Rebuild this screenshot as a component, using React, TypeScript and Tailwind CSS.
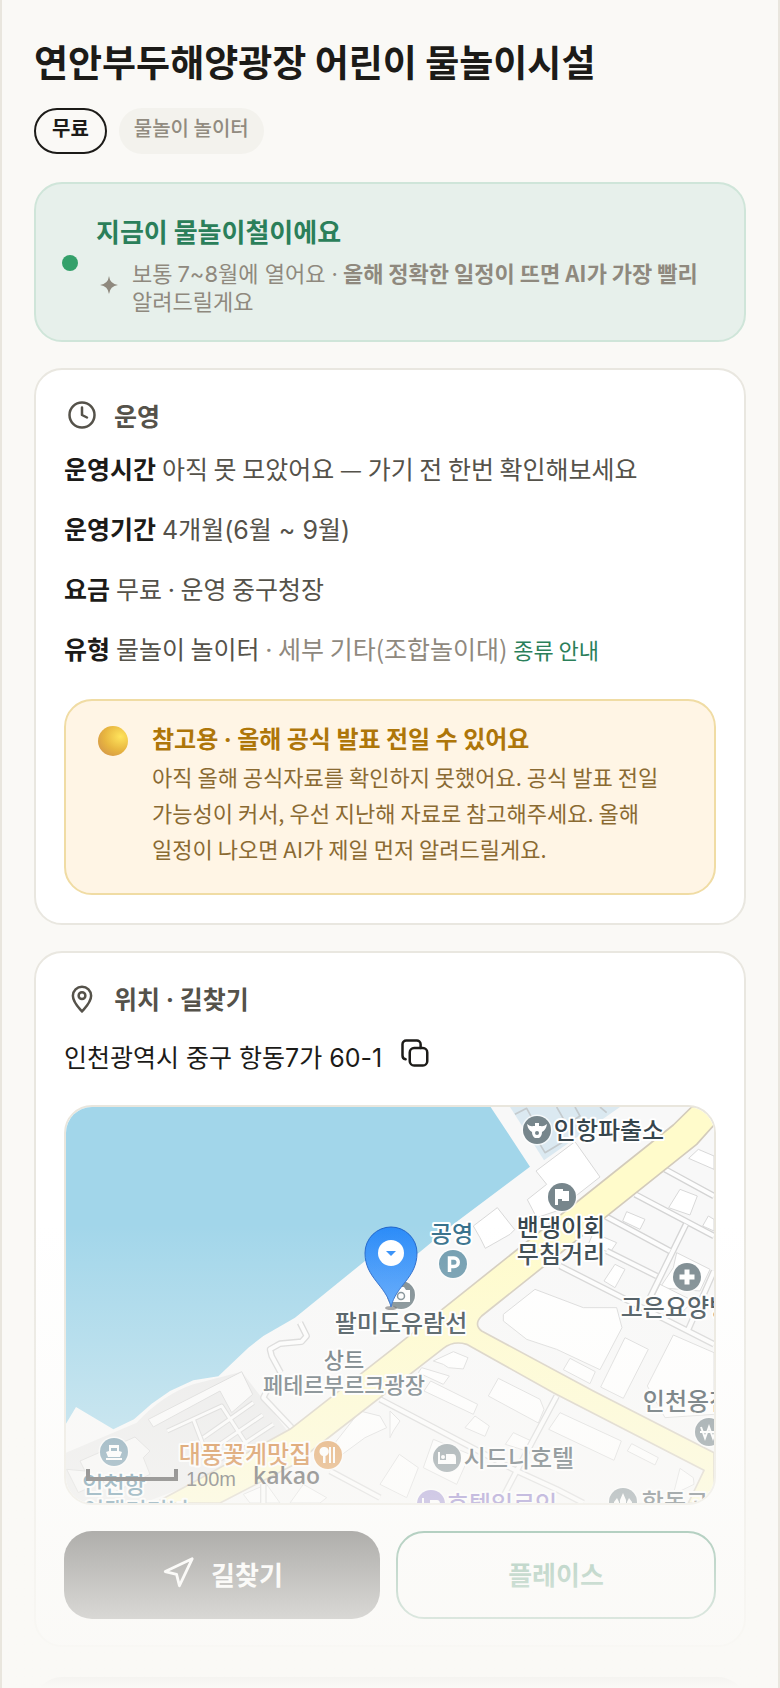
import React from 'react';
import { Clock, Navigation } from 'lucide-react';

type LabelProps = {
  x: number;
  y: number;
  size?: number;
  fill?: string;
  children: string;
};

function MapLabel({ x, y, size = 24, fill = '#36454c', children }: LabelProps) {
  return (
    <text
      x={x}
      y={y}
      fontSize={size}
      fill={fill}
      fontWeight={500}
      textAnchor="middle"
      stroke="#ffffff"
      strokeWidth={4}
      strokeLinejoin="round"
      paintOrder="stroke"
    >
      {children}
    </text>
  );
}

function Badge({ x, y, fill = '#77868c', children }: { x: number; y: number; fill?: string; children?: React.ReactNode }) {
  return (
    <g transform={`translate(${x} ${y})`}>
      <circle r="15.5" fill="#ffffff" opacity="0.7" />
      <circle r="14" fill={fill} />
      {children}
    </g>
  );
}

function HarborMap() {
  return (
    <svg
      viewBox="0 0 648 396"
      preserveAspectRatio="xMidYMid slice"
      className="block h-full w-full font-['Noto_Sans_CJK_KR',sans-serif]"
      role="img"
      aria-label="지도"
    >
      <defs>
        <linearGradient id="pin" x1="0" y1="0" x2="0" y2="1">
          <stop offset="0" stopColor="#2a8bf8" />
          <stop offset="1" stopColor="#4a9dfb" />
        </linearGradient>
      </defs>
      <rect width="648" height="396" fill="#f8f8f8" />
      <g transform="translate(-6 -6) scale(0.33333)" strokeLinejoin="round">
        {/* sea */}
        <path
          d="M0 0H1280L1410 197L1180 370L1075 457L915 480L705 650L610 705L565 740L475 826L400 838L330 870L275 908L222 955L160 985L48 918L18 968L0 990Z"
          fill="#a2d6ea"
        />
        <path d="M1350 18L1452 178L1680 18Z" fill="#dbe9f1" />
        <path d="M1365 40L1400 22L1420 58M1440 130L1455 155L1530 110M1490 18L1520 70L1560 45L1545 18M1620 18L1640 35" fill="none" stroke="#c4cacd" strokeWidth="5" />
        {/* port blocks */}
        <path d="M18 1055L230 965Q310 880 400 850L545 812L690 1000L370 1160L250 1206H18Z" fill="#e9e9e9" />
        <path d="M265 955L545 812L578 880L515 935L480 870L280 978Z" fill="#fafafa" stroke="#d4d4d4" strokeWidth="3" />
        <path d="M20 1105L55 1175L130 1140L150 1180L270 1120L250 1070L270 1050L225 1008L60 1080L75 1110Z" fill="#f6f6f6" stroke="#d4d4d4" strokeWidth="3" />
        <g fill="none" stroke="#d0d0d0" strokeWidth="15">
          <path d="M322 990L485 915L560 1030M400 955L440 1060M430 1010L580 905M450 1050L608 942M480 1075L640 970" />
        </g>
        <g fill="none" stroke="#fcfcfc" strokeWidth="9">
          <path d="M322 990L485 915L560 1030M400 955L440 1060M430 1010L580 905M450 1050L608 942M480 1075L640 970" />
        </g>
        {/* buildings */}
        <g fill="#ffffff" stroke="#d8d8d8" strokeWidth="3">
          <path d="M1428 210L1545 122L1620 228L1490 330L1430 350L1402 296L1460 250Z" />
          <path d="M1240 375L1312 320L1364 386L1350 400L1276 442L1260 410Z" />
          <path d="M1330 640L1425 565L1570 620L1670 620L1686 680L1620 806L1490 745L1400 715L1330 660Z" />
          <path d="M1530 772L1606 812L1590 848L1510 806Z" />
          <path d="M1695 710L1765 745L1690 892L1622 858Z" />
          <path d="M1840 702L1962 755V940L1815 950L1762 855Z" />
          <path d="M1315 832L1440 895L1452 925L1435 966L1285 885Z" />
          <path d="M1500 935L1684 1020L1662 1078L1466 985Z" />
          <path d="M1112 840L1253 910L1240 940L1092 870Z" />
          <path d="M1245 945L1288 975L1275 1006L1215 980Z" />
          <path d="M1360 995L1410 1018L1400 1050L1336 1030Z" />
          <path d="M1715 1028L1795 1070L1785 1092L1702 1050Z" />
          <path d="M1860 1102L1900 1130L1902 1150L1840 1180Z" />
          <path d="M1120 780L1180 752L1224 770L1210 804L1165 800L1150 790Z" />
          <path d="M1085 800L1168 825L1150 850L1075 815Z" />
          <path d="M900 930L960 945L980 980L915 1010L820 1080L790 1070Z" />
          <path d="M990 1010V930L1020 960L1000 990Z" />
          <path d="M1120 1015L1230 1060L1190 1150L1090 1100Z" />
          <path d="M1860 265L1912 285L1890 342L1826 320Z" />
          <path d="M1915 145L1962 165V205L1886 172Z" />
          <path d="M1700 332L1755 355L1740 385L1688 360Z" />
          <path d="M1665 490L1695 505L1665 560L1632 540Z" />
          <path d="M1850 455L1950 505L1920 570L1800 560L1840 500Z" />
          <path d="M1800 550L1900 600L1850 650L1770 610Z" />
          <path d="M1945 345L1962 355V390L1928 375Z" />
          <path d="M1600 395L1670 425L1650 455L1585 430Z" />
          <path d="M550 1180L620 1150L660 1206H570Z" />
          <path d="M730 1150L800 1190L780 1206H690Z" />
          <path d="M1018 1060L1075 1100L1040 1190L960 1150Z" />
        </g>
        {/* side streets */}
        <g fill="none" stroke="#d4d4d4" strokeWidth="20">
          <path d="M1725 280L1962 405M1815 205L1962 285M1635 345L1830 450M1500 495L1962 730M1878 370L1765 600M1640 450L1790 525M1962 510L1885 685" />
          <path d="M720 665L740 705L725 722L660 728L630 745L635 765L662 815" />
          <path d="M700 985L610 890L625 860" />
          <path d="M960 895L1370 1110L1490 1165L1570 1206M1490 885L1370 1110L1320 1206M810 1110L960 1190M610 1150V1206" />
        </g>
        <g fill="none" stroke="#fdfdfd" strokeWidth="12">
          <path d="M1725 280L1962 405M1815 205L1962 285M1635 345L1830 450M1500 495L1962 730M1878 370L1765 600M1640 450L1790 525M1962 510L1885 685" />
          <path d="M720 665L740 705L725 722L660 728L630 745L635 765L662 815" />
          <path d="M700 985L610 890L625 860" />
          <path d="M960 895L1370 1110L1490 1165L1570 1206M1490 885L1370 1110L1320 1206M810 1110L960 1190M610 1150V1206" />
        </g>
        {/* main roads */}
        <path
          d="M1895 18L1840 72L1000 742L690 985L370 1160L285 1206H480L700 1092L1150 742Q1180 718 1220 730L1480 875L1932 1108L1885 1206H1962V1055L1600 870L1265 690Q1240 670 1265 645L1910 130L1962 72V18Z"
          fill="#fffbcb"
          stroke="#d3cbbb"
          strokeWidth="5"
        />
      </g>

      <Badge x={471} y={23}>
        <path d="M-10-6Q-6-3-4-4L-2-4V-7H2V-4L4-4Q6-3 10-6Q9 0 5 2Q5 6 2 8H-2Q-5 6-5 2Q-9 0-10-6Z" fill="#fff" />
        <circle cy="3" r="2" fill="#77868c" />
      </Badge>
      <MapLabel x={543} y={32}>인항파출소</MapLabel>
      <Badge x={496} y={90}>
        <path d="M-7-8H1V-6H7V4H0V2H-4V8H-7Z" fill="#fff" />
      </Badge>
      <MapLabel x={495} y={129}>밴댕이회</MapLabel>
      <MapLabel x={495} y={156}>무침거리</MapLabel>
      <MapLabel x={386} y={135} size={23} fill="#37718c">공영</MapLabel>
      <Badge x={387} y={157} fill="#6f9bae">
        <path d="M-3.500 8V-6H1A4 4 0 0 1 1 2.500H-3" fill="none" stroke="#fff" strokeWidth="3.500" />
      </Badge>
      <Badge x={621} y={170}>
        <path d="M-2.500-7.500H2.500V-2.500H7.500V2.500H2.500V7.500H-2.500V2.500H-7.500V-2.500H-2.500Z" fill="#fff" />
      </Badge>
      <MapLabel x={621} y={209}>고은요양병원</MapLabel>
      <Badge x={335} y={188}>
        <path d="M-9-5H-4L-2-8H3L5-5H9V7H-9Z" fill="#fff" />
        <circle cy="1" r="3.500" fill="none" stroke="#77868c" strokeWidth="1.500" />
      </Badge>
      <MapLabel x={335} y={225}>팔미도유람선</MapLabel>
      <MapLabel x={278} y={261} size={22} fill="#55636a">상트</MapLabel>
      <MapLabel x={278} y={286} size={22} fill="#55636a">페테르부르크광장</MapLabel>
      <MapLabel x={621} y={303}>인천옹진</MapLabel>
      <Badge x={643} y={325}>
        <path d="M-8-5L-4 6L0-5L4 6L8-5M-9 0H9" fill="none" stroke="#fff" strokeWidth="2" />
      </Badge>
      <MapLabel x={179} y={356} fill="#c96a12">대풍꽃게맛집</MapLabel>
      <Badge x={262} y={348} fill="#dc9145">
        <path d="M-4-8A4 4.500 0 0 1-2.500 1V8H-5V1A4 4.500 0 0 1-4-8ZM1-8H3V8H1ZM5-8H7V8H5Z" fill="#fff" />
      </Badge>
      <Badge x={381} y={351}>
        <path d="M-9-6H-7V3H9V6H-9Z" fill="#fff" />
        <path d="M-1-4H6Q9-4 9 0V6H7V3H-7V6H-9V2H-1Z" fill="#fff" />
        <circle cx="-4" cy="-1" r="2" fill="#fff" />
      </Badge>
      <MapLabel x={453} y={360}>시드니호텔</MapLabel>
      <Badge x={48} y={345} fill="#648ea3">
        <path d="M-5-7H5V-1L8 0L6 5H-6L-8 0L-5-1ZM-8 6H8V8H-8Z" fill="#fff" />
        <path d="M-3-4H3V-1H-3Z" fill="#648ea3" />
      </Badge>
      <MapLabel x={48} y={386} size={23} fill="#37718c">인천항</MapLabel>
      <MapLabel x={70} y={412} size={23} fill="#37718c">여객터미널</MapLabel>
      <Badge x={365} y={397} fill="#9788cf">
        <path d="M-9-6H-7V0H9V6H-9ZM-1-4H6Q9-4 9 0H-1Z" fill="#fff" />
      </Badge>
      <MapLabel x={436} y={406} fill="#7c68c0">호텔일르인</MapLabel>
      <Badge x={557} y={395}>
        <path d="M0-9L3-2V6H-3V-2ZM-6-4L-4 0V6H-9V0ZM6-4L9 0V6H4V0Z" fill="#fff" />
      </Badge>
      <MapLabel x={620} y={404}>항동고가</MapLabel>

      {/* scale bar and brand */}
      <path d="M22 362V372H110V362" fill="none" stroke="#2a2a2a" strokeWidth="4" />
      <text x="120" y="379" fontSize="20" fill="#333333" className="font-['Liberation_Sans',sans-serif]">100m</text>
      <text x="187" y="377" fontSize="23" fontWeight={600} fill="#333333" className="font-['Open_Sans',sans-serif]">kakao</text>

      {/* place marker */}
      <ellipse cx="325" cy="201" rx="6" ry="2" fill="#555555" opacity="0.6" />
      <path
        d="M325 200C320 178 299 171 299 146A26 26 0 0 1 351 146C351 171 330 178 325 200Z"
        fill="url(#pin)"
        stroke="#1f63c8"
      />
      <circle cx="325" cy="146" r="13" fill="#ffffff" />
      <path d="M320 144H330L325 149Z" fill="#2f8df8" />
    </svg>
  );
}

function PlaceIcon() {
  return (
    <svg viewBox="0 0 24 24" className="h-[30px] w-9" fill="none" stroke="currentColor" strokeWidth="2" strokeLinejoin="round">
      <path d="M12 22C9 18.500 4.700 14.500 4.700 9.400A7.300 7.300 0 0 1 19.300 9.400C19.300 14.500 15 18.500 12 22Z" />
      <circle cx="12" cy="9.300" r="2.700" />
    </svg>
  );
}

function CopyIcon() {
  return (
    <svg viewBox="0 0 24 24" className="h-[30px] w-[30px]" fill="none" stroke="currentColor" strokeWidth="2" strokeLinecap="round">
      <rect x="7.800" y="8" width="14" height="14" rx="3.500" />
      <path d="M4.500 17A3 3 0 0 1 2 14V5A3 3 0 0 1 5 2H13A3 3 0 0 1 16.500 5V8" />
    </svg>
  );
}

// digits and punctuation in Inter, Hangul in Noto
function Latin({ children }: { children: React.ReactNode }) {
  return <span className="font-[Inter,'Noto_Sans_CJK_KR',sans-serif] leading-none">{children}</span>;
}

function Row({ label, children }: { label: string; children: React.ReactNode }) {
  return (
    <div className="flex gap-1.5">
      <dt className="font-bold text-[#1c1b18]">{label}</dt>
      <dd>{children}</dd>
    </div>
  );
}

function Card({ children }: { children: React.ReactNode }) {
  return (
    <section className="mt-[26px] rounded-[28px] border-2 border-[#e9e7e0] bg-white px-7 pt-[27px] pb-[26px]">{children}</section>
  );
}

export default function App() {
  return (
    <div className="relative h-screen overflow-hidden border-x-2 border-[#e9e6de] bg-[#faf9f6] px-8 pt-[34px] font-['Noto_Sans_CJK_KR',sans-serif] text-[25px] text-[#55524a]">
      <h1 className="text-[37px] leading-[54px] font-bold text-[#1c1b18]">연안부두해양광장 어린이 물놀이시설</h1>

      <div className="mt-5 flex gap-3 text-xl leading-8">
        <span className="rounded-full border-2 border-[#1c1b18] px-4 pt-0.5 pb-2 font-bold text-[#1c1b18]">무료</span>
        <span className="rounded-full bg-[#f3f2ed] px-[15px] pt-1 pb-2.5 font-medium text-[#918b80]">물놀이 놀이터</span>
      </div>

      <section className="mt-7 flex items-center gap-[18px] rounded-[28px] border-2 border-[#cfe5d9] bg-[#e7f0eb] px-[26px] pt-7 pb-[26px]">
        <span className="h-4 w-4 shrink-0 rounded-full bg-[#34a06a]" />
        <div>
          <h2 className="text-[26px] leading-[38px] font-bold text-[#2b7f5a]">지금이 물놀이철이에요</h2>
          <div className="mt-2 flex items-center text-[22px] leading-7 text-[#8f897e]">
            <svg viewBox="0 0 18 18" className="mr-3.5 mb-0.5 ml-1 h-[18px] w-[18px] shrink-0" fill="currentColor">
              <path d="M9 0Q10 8 18 9Q10 10 9 18Q8 10 0 9Q8 8 9 0Z" />
            </svg>
            <p className="break-keep">
              보통 <Latin>7~8월에 열어요 ·</Latin> <b className="font-bold">올해 정확한 일정이 뜨면 AI가 가장 빨리</b> 알려드릴게요
            </p>
          </div>
        </div>
      </section>

      <Card>
        <h2 className="flex items-center gap-3.5 leading-9 font-bold">
          <Clock className="h-[30px] w-9" strokeWidth={2} />
          운영
        </h2>
        <dl className="mt-[15px] flex flex-col gap-5 leading-10">
          <Row label="운영시간">아직 못 모았어요 — 가기 전 한번 확인해보세요</Row>
          <Row label="운영기간">
            <Latin>4개월(6월 ~ 9월)</Latin>
          </Row>
          <Row label="요금">
            무료 <Latin>·</Latin> 운영 중구청장
          </Row>
          <Row label="유형">
            물놀이 놀이터{' '}
            <span className="text-[#8f897e]">
              <Latin>·</Latin> 세부 기타(조합놀이대)
            </span>{' '}
            <a href="#types" className="text-[22px] text-[#2b7f5a]">종류 안내</a>
          </Row>
        </dl>
        <div className="mt-[30px] mb-0.5 flex gap-6 rounded-[28px] border-2 border-[#f0dca4] bg-[#fff5e5] px-8 pt-[21px] pb-[27px]">
          <span className="mt-1 h-[30px] w-[30px] shrink-0 rounded-full bg-radial-[at_75%_35%] from-[#ffe45c] via-[#e8b640] to-[#cc8a4c]" />
          <div>
            <h3 className="mb-1 text-2xl leading-8 font-bold text-[#ae7609]">
              참고용 <Latin>·</Latin> 올해 공식 발표 전일 수 있어요
            </h3>
            <p className="text-[22px] leading-9 break-keep text-[#8a6a32]">
              아직 올해 공식자료를 확인하지 못했어요. 공식 발표 전일 가능성이 커서, 우선 지난해 자료로 참고해주세요. 올해 일정이 나오면 AI가 제일 먼저 알려드릴게요.
            </p>
          </div>
        </div>
      </Card>

      <Card>
        <h2 className="flex items-center gap-3.5 leading-9 font-bold">
          <PlaceIcon />
          <span className="pb-0.5">
            위치 <Latin>·</Latin> 길찾기
          </span>
        </h2>
        <div className="mt-[18px] flex items-start gap-[18px] text-[#1c1b18]">
          <address className="leading-10 not-italic">
            <Latin>인천광역시 중구 항동7가 60-1</Latin>
          </address>
          <button type="button" aria-label="주소 복사" className="mt-0.5">
            <CopyIcon />
          </button>
        </div>
        <div className="mt-[29px] h-[400px] overflow-hidden rounded-[28px] border-2 border-[#e9e6dd]">
          <HarborMap />
        </div>
        <div className="mt-[26px] flex gap-4 text-[26px] font-bold">
          <button type="button" className="flex h-[88px] flex-1 items-center justify-center gap-4 rounded-[28px] bg-[#1c1b18] pb-1 text-white">
            <Navigation size={34} strokeWidth={2} />
            길찾기
          </button>
          <button type="button" className="h-[88px] flex-1 rounded-[28px] border-2 border-[#2b7f5a] pb-1 text-[#2b7f5a]">
            플레이스
          </button>
        </div>
      </Card>

      <section className="mt-[30px] h-40 rounded-[28px] bg-[#1c1b18]" />

      <div className="pointer-events-none absolute inset-x-0 bottom-0 h-[464px] bg-linear-to-b from-[#faf9f6]/0 to-[#faf9f6]" />
    </div>
  );
}
